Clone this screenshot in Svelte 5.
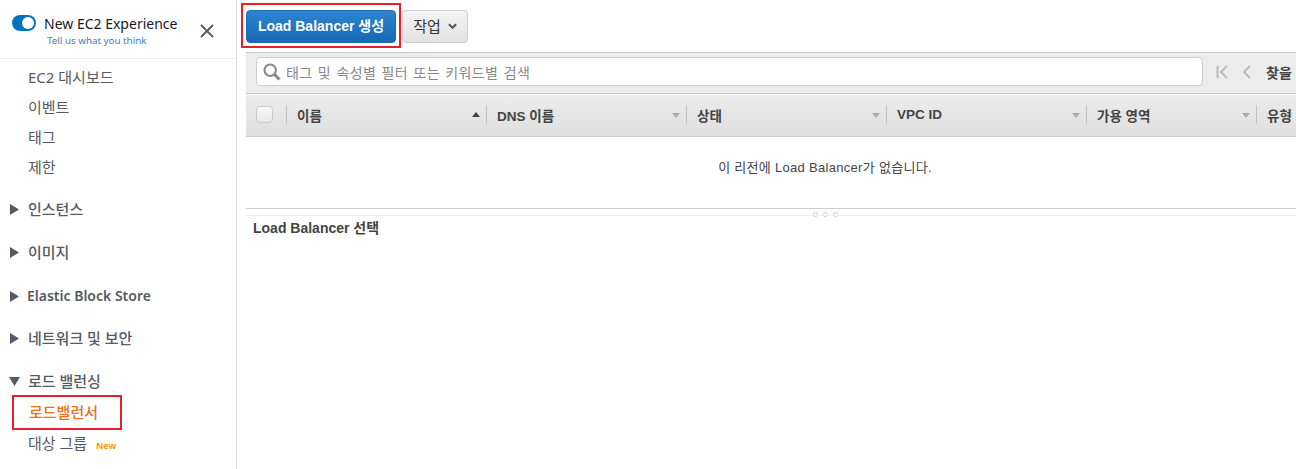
<script lang="ts">
	const topItems = ['EC2 대시보드', '이벤트', '태그', '제한'];
	const sections = [
		{ label: '인스턴스' },
		{ label: '이미지' },
		{ label: 'Elastic Block Store', latin: true },
		{ label: '네트워크 및 보안' }
	];
	const columns = [
		{ label: '이름', width: 200, sorted: true },
		{ label: 'DNS 이름', width: 200 },
		{ label: '상태', width: 200 },
		{ label: 'VPC ID', width: 200 },
		{ label: '가용 영역', width: 170 },
		{ label: '유형', width: 120 }
	];
</script>

<div class="page">
	<aside class="sidebar">
		<div class="experience">
			<span class="toggle"><span class="knob"></span></span>
			<div class="experience-text">
				<div class="experience-title">New EC2 Experience</div>
				<div class="experience-link">Tell us what you think</div>
			</div>
			<svg class="close" viewBox="0 0 14 14" aria-hidden="true">
				<path d="M1 1 L13 13 M13 1 L1 13" />
			</svg>
		</div>
		<nav class="nav">
			<ul class="top-items">
				{#each topItems as item}
					<li>{item}</li>
				{/each}
			</ul>
			{#each sections as section}
				<div class="section" class:latin={section.latin}>
					<svg class="caret" viewBox="0 0 9 11" aria-hidden="true"><polygon points="0,0 9,5.5 0,11" /></svg>
					{section.label}
				</div>
			{/each}
			<div class="section open">
				<svg class="caret-down" viewBox="0 0 11 9" aria-hidden="true"><polygon points="0,0 11,0 5.5,9" /></svg>
				로드 밸런싱
			</div>
			<div class="current-box">로드밸런서</div>
			<div class="sub-item">대상 그룹 <span class="new">New</span></div>
		</nav>
	</aside>

	<main class="main">
		<div class="actions">
			<div class="highlight">
				<button class="primary">Load Balancer 생성</button>
			</div>
			<button class="secondary">
				작업
				<svg viewBox="0 0 10 6" aria-hidden="true"><path d="M1 1 L5 5 L9 1" /></svg>
			</button>
		</div>

		<div class="toolbar">
			<div class="search">
				<svg viewBox="0 0 18 18" aria-hidden="true">
					<circle cx="7.2" cy="7.2" r="5.7" />
					<path class="handle" d="M11.5 11.5 L16.5 16.5" />
				</svg>
				<span>태그 및 속성별 필터 또는 키워드별 검색</span>
			</div>
			<div class="pager">
				<svg viewBox="0 0 12 14" aria-hidden="true"><path d="M1.5 1 V13 M11 1 L5 7 L11 13" /></svg>
				<svg class="prev" viewBox="0 0 8 14" aria-hidden="true"><path d="M7 1 L1 7 L7 13" /></svg>
				<span>찾을</span>
			</div>
		</div>

		<div class="table-head">
			<div class="check-cell"><span class="checkbox"></span></div>
			{#each columns as col}
				<div class="col" style="width: {col.width}px">
					<span>{col.label}</span>
					{#if col.sorted}
						<span class="sort active"></span>
					{:else}
						<span class="sort"></span>
					{/if}
				</div>
			{/each}
		</div>

		<div class="empty"><span>이 리전에 Load Balancer가 없습니다.</span></div>

		<div class="splitter">
			<span></span><span></span><span></span>
		</div>

		<div class="detail">Load Balancer 선택</div>
	</main>
</div>

<style>
	:global(body) {
		margin: 0;
		background: #fff;
	}

	.page {
		display: flex;
		width: 1296px;
		height: 469px;
		overflow: hidden;
		font-family: "Liberation Sans", "Noto Sans CJK KR", sans-serif;
		color: #444;
	}

	.sidebar {
		width: 236px;
		flex-shrink: 0;
		border-right: 1px solid #d5dbdb;
		font-family: "Noto Sans", "Noto Sans CJK KR", sans-serif;
		color: #545b64;
		font-size: 15px;
	}

	.experience {
		display: flex;
		height: 59px;
		box-sizing: border-box;
		border-bottom: 1px solid #eaeded;
		padding: 14px 0 0 12px;
	}

	.toggle {
		width: 24px;
		height: 16px;
		border-radius: 8px;
		background: #0073bb;
		position: relative;
		margin-top: 1px;
		flex-shrink: 0;
	}

	.knob {
		position: absolute;
		right: 2px;
		top: 2px;
		width: 12px;
		height: 12px;
		border-radius: 50%;
		background: #fff;
	}

	.experience-text {
		margin-left: 8px;
	}

	.experience-title {
		font-size: 14px;
		line-height: 19px;
		color: #16191f;
	}

	.experience-link {
		font-size: 9.8px;
		line-height: 14px;
		margin: 1px 0 0 3px;
		color: #3b7fc4;
	}

	.close {
		width: 14px;
		height: 14px;
		margin: 10px 0 0 23px;
		fill: none;
		stroke: #545b64;
		stroke-width: 1.8;
	}

	.nav {
		padding-top: 3px;
	}

	.top-items {
		list-style: none;
		margin: 0;
		padding: 0 0 0 28px;
	}

	.top-items li {
		height: 30px;
		line-height: 30px;
	}

	.section {
		display: flex;
		align-items: center;
		gap: 9px;
		height: 20px;
		line-height: 20px;
		padding-left: 10px;
		margin-top: 23px;
		font-weight: 500;
	}

	.section:first-of-type {
		margin-top: 17px;
	}

	.section.latin {
		font-size: 14px;
		font-weight: 600;
		transform: translateY(1px);
		gap: 8px;
	}

	.caret {
		width: 9px;
		height: 11px;
		fill: #545b64;
	}

	.caret-down {
		width: 11px;
		height: 9px;
		margin-left: -1px;
		margin-right: -1px;
		fill: #545b64;
	}

	.current-box {
		width: 110px;
		height: 35px;
		box-sizing: border-box;
		margin: 4px 0 0 12px;
		border: 2px solid #e8202a;
		padding-left: 15px;
		line-height: 30px;
		color: #ec7211;
		font-weight: 500;
	}

	.sub-item {
		padding-left: 28px;
		height: 24px;
		line-height: 24px;
		margin-top: 1px;
	}

	.new {
		font-size: 9px;
		font-weight: 700;
		color: #ff9900;
		margin-left: 5px;
	}

	.main {
		flex: 1;
		min-width: 0;
		padding-left: 9px;
	}

	.actions {
		display: flex;
		align-items: flex-start;
		height: 52px;
		padding-top: 3px;
		box-sizing: border-box;
		margin-left: -5px;
	}

	.highlight {
		border: 2px solid #e8202a;
		padding: 5px 3px 3px;
		height: 45px;
		width: 160px;
		box-sizing: border-box;
	}

	button {
		font-family: "Liberation Sans", "Noto Sans CJK KR", sans-serif;
		cursor: pointer;
	}

	.primary {
		display: block;
		width: 150px;
		height: 33px;
		padding: 0 0 4px;
		border: 1px solid #1a6db3;
		border-radius: 4px;
		background: linear-gradient(#2f84d0, #1569b5);
		color: #fff;
		font-size: 14px;
		font-weight: 700;
	}

	.secondary {
		display: flex;
		align-items: center;
		justify-content: center;
		gap: 7px;
		width: 66px;
		height: 33px;
		margin: 7px 0 0 1px;
		padding: 0 0 2px;
		border: 1px solid #ccc;
		border-radius: 4px;
		background: linear-gradient(#f4f4f4, #e2e2e2);
		color: #333;
		font-size: 15px;
	}

	.secondary svg {
		width: 9px;
		height: 6px;
		fill: none;
		stroke: #555;
		stroke-width: 2.2;
	}

	.toolbar {
		display: flex;
		align-items: center;
		height: 42px;
		box-sizing: border-box;
		border-top: 1px solid #c8c8c8;
		border-bottom: 1px solid #c8c8c8;
		background: #ececec;
		padding: 0 0 3px 10px;
		overflow: hidden;
	}

	.search {
		display: flex;
		align-items: center;
		gap: 5px;
		width: 947px;
		height: 29px;
		flex-shrink: 0;
		box-sizing: border-box;
		border: 1px solid #ccc;
		border-radius: 4px;
		background: #fff;
		padding-left: 6px;
		font-size: 14px;
		letter-spacing: 0.4px;
		word-spacing: 1px;
		color: #888;
	}

	.search svg {
		width: 18px;
		height: 18px;
		fill: none;
		stroke: #888;
		stroke-width: 2;
	}

	.search .handle {
		stroke-width: 3;
	}

	.pager {
		display: flex;
		align-items: center;
		margin-left: 13px;
		font-size: 14px;
		font-weight: 700;
		color: #444;
		white-space: nowrap;
	}

	.pager svg {
		width: 12px;
		height: 14px;
		fill: none;
		stroke: #bbb;
		stroke-width: 2;
	}

	.pager .prev {
		width: 8px;
		margin-left: 15px;
	}

	.pager span {
		margin-left: 15px;
	}

	.table-head {
		display: flex;
		height: 43px;
		box-sizing: border-box;
		border-top: 1px solid #f6f6f6;
		border-bottom: 1px solid #ccc;
		background: linear-gradient(#ececec, #dfdfdf);
		overflow: hidden;
	}

	.check-cell {
		width: 40px;
		flex-shrink: 0;
		display: flex;
		align-items: center;
		padding: 0 0 2px 10px;
		box-sizing: border-box;
	}

	.checkbox {
		width: 15px;
		height: 15px;
		border: 1px solid #ccc;
		border-radius: 4px;
		background: linear-gradient(#f8f8f8, #e8e8e8);
	}

	.col {
		display: flex;
		align-items: center;
		justify-content: space-between;
		flex-shrink: 0;
		box-sizing: border-box;
		height: 100%;
		padding: 0 6px 2px 11px;
		font-size: 13.5px;
		font-weight: 700;
		color: #444;
		position: relative;
		white-space: nowrap;
	}

	.col::before {
		content: "";
		position: absolute;
		left: 0;
		top: 10px;
		bottom: 12px;
		width: 1px;
		background: #c4c4c4;
	}

	.sort {
		width: 0;
		height: 0;
		border-left: 4px solid transparent;
		border-right: 4px solid transparent;
		border-top: 5px solid #aaa;
		margin-top: 2px;
	}

	.sort.active {
		border-top: 0;
		border-bottom: 5px solid #444;
		margin-top: 0;
	}

	.empty {
		height: 72px;
		line-height: 62px;
		font-size: 13px;
		letter-spacing: 0.3px;
		color: #444;
		border-bottom: 1px solid #ccc;
		box-sizing: border-box;
	}

	.empty span {
		display: block;
		width: 1158px;
		text-align: center;
	}

	.splitter {
		display: flex;
		justify-content: center;
		gap: 5px;
		width: 1158px;
		height: 6px;
		position: relative;
	}

	.splitter::after {
		content: "";
		position: absolute;
		left: 0;
		top: 6px;
		width: 1050px;
		height: 1px;
		background: #eee;
	}

	.splitter span {
		width: 5px;
		height: 5px;
		box-sizing: border-box;
		border: 1px solid #ccc;
		border-radius: 50%;
		margin-top: 3px;
	}

	.detail {
		padding: 5px 0 0 7px;
		font-size: 14px;
		line-height: 17px;
		font-weight: 700;
		color: #444;
	}
</style>
